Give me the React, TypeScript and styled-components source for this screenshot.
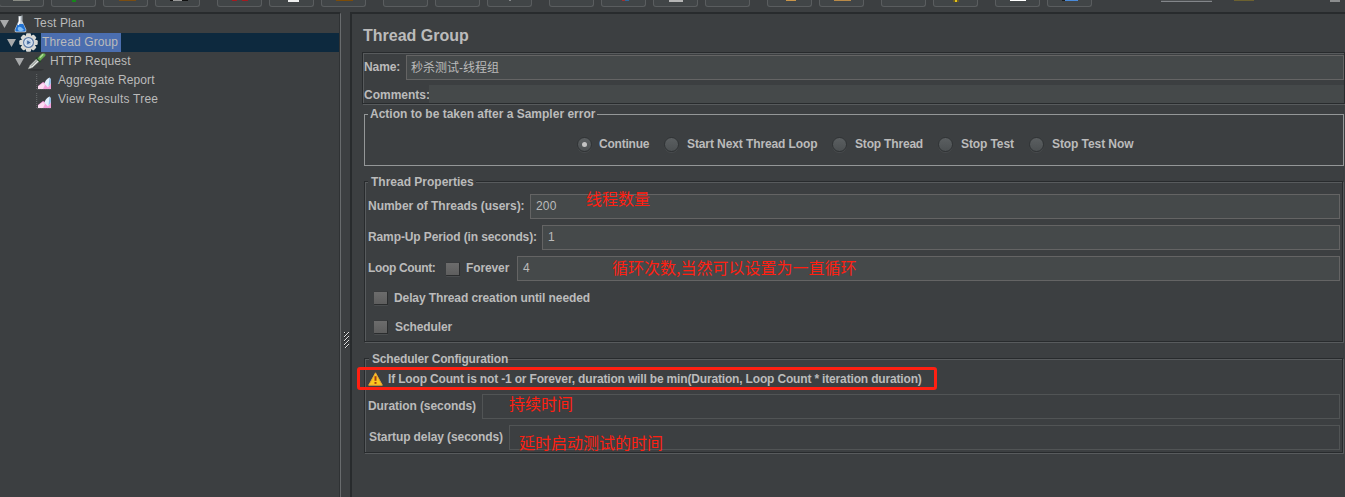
import React from 'react';
import styled, { createGlobalStyle } from 'styled-components';

const c = {
  bg: '#3c3f41',
  field: '#45494a',
  fieldLine: '#646464',
  offLine: '#515455',
  text: '#bbbbbb',
  dark: '#282b2d',
  light: '#585b5d',
  red: '#ff2012',
};

const Global = createGlobalStyle`
  *, *::before, *::after { box-sizing: border-box; }
  html, body { margin: 0; background: ${c.bg}; }
  body { font-family: 'Liberation Sans', 'Noto Sans CJK SC', sans-serif; font-size: 12px; color: ${c.text}; }
`;

const Window = styled.div`
  position: relative;
  display: flex;
  flex-direction: column;
  width: 1345px;
  height: 497px;
  overflow: hidden;
  background: ${c.bg};
`;

/* ---- toolbar ---- */
const Toolbar = styled.div`
  display: flex;
  align-items: flex-start;
  height: 12px;
  flex: none;
  margin-left: -1px;
`;
const ToolButton = styled.div<{ $gap: number }>`
  display: flex;
  flex: none;
  width: 45px;
  height: 7px;
  margin-right: ${p => p.$gap}px;
  border: 1px solid #5a5d5f;
  border-top: 0;
  border-radius: 0 0 3px 3px;
  background: #414547;
`;
const Glyph = styled.span<{ $x: number; $w: number; $fill: string; $h?: number }>`
  flex: none;
  width: ${p => p.$w}px;
  height: ${p => p.$h ?? 1}px;
  margin-left: ${p => p.$x}px;
  background: ${p => p.$fill};
`;

/* ---- body ---- */
const Body = styled.div`
  display: flex;
  flex: 1;
  min-height: 0;
`;
const Tree = styled.div`
  width: 341px;
  flex: none;
  border-top: 2px solid ${c.dark};
  border-right: 1px solid #686b6d;
  box-shadow: inset -1px 0 0 #2f3234;
`;
const TreeRow = styled.div<{ $indent: number; $selected?: boolean }>`
  display: flex;
  align-items: center;
  height: 19px;
  margin-right: 1px;
  padding-left: ${p => p.$indent}px;
  background: ${p => (p.$selected ? '#0d293e' : 'transparent')};
`;
const Arrow = styled.svg`
  flex: none;
  width: 9px;
  height: 8px;
  margin-top: 1px;
`;
const TreeIcon = styled.svg<{ $x: number; $w: number }>`
  flex: none;
  width: ${p => p.$w}px;
  height: 19px;
  margin-left: ${p => p.$x}px;
`;
const TreeLabel = styled.span<{ $x: number; $selected?: boolean; $s?: number }>`
  height: 19px;
  line-height: 19px;
  margin-left: ${p => p.$x}px;
  padding: 0 3px 0 1px;
  letter-spacing: ${p => p.$s ?? 0.12}px;
  white-space: nowrap;
  background: ${p => (p.$selected ? '#4b6eaf' : 'transparent')};
`;
const Splitter = styled.div`
  display: flex;
  width: 9px;
  flex: none;
  padding: 320px 0 0 3px;
`;
const Main = styled.div`
  flex: 1;
  min-width: 0;
  border-top: 2px solid ${c.dark};
  border-left: 2px solid ${c.dark};
`;
const Title = styled.div`
  height: 38px;
  padding: 3px 0 0 11px;
  line-height: 38px;
  font-size: 16px;
  font-weight: bold;
`;
const Etched = styled.div<{ $w: number; $h: number; $mt?: number; $ml: number }>`
  width: ${p => p.$w}px;
  height: ${p => p.$h}px;
  margin: ${p => p.$mt ?? 0}px 0 0 ${p => p.$ml}px;
  border: 1px solid ${c.dark};
  box-shadow: 1px 1px 0 ${c.light}, inset 1px 1px 0 ${c.light};
`;
const ActionGroup = styled.div`
  width: 980px;
  height: 52px;
  margin: 10px 0 0 12px;
  border: 1px solid #949798;
`;
const Legend = styled.div<{ $x: number; $w: number; $pad: number; $s?: number; $line?: number }>`
  width: ${p => p.$w}px;
  height: 16px;
  margin: -8px 0 0 ${p => p.$x}px;
  padding-left: ${p => p.$pad}px;
  line-height: ${p => p.$line ?? 15}px;
  font-weight: bold;
  letter-spacing: ${p => p.$s ?? 0}px;
  white-space: nowrap;
  background: ${c.bg};
`;
const Row = styled.div<{ $mt?: number; $h?: number; $x?: number }>`
  display: flex;
  align-items: center;
  height: ${p => p.$h ?? 25}px;
  margin-top: ${p => p.$mt ?? 0}px;
  padding-left: ${p => p.$x ?? 3}px;
  padding-right: 2px;
`;
const Label = styled.span<{ $w?: number; $s?: number }>`
  flex: none;
  width: ${p => (p.$w ? p.$w + 'px' : 'auto')};
  line-height: 15px;
  font-weight: bold;
  letter-spacing: ${p => p.$s ?? 0}px;
  white-space: nowrap;
`;
const Field = styled.div<{ $off?: boolean }>`
  flex: 1;
  height: 25px;
  padding-left: 5px;
  line-height: 23px;
  letter-spacing: 0.2px;
  border: 1px solid ${p => (p.$off ? c.offLine : c.fieldLine)};
  background: ${p => (p.$off ? 'transparent' : c.field)};
`;
const NameField = styled(Field)`
  padding-left: 4px;
  line-height: 24px;
  letter-spacing: 0;
`;
const NameRow = styled.div`
  display: flex;
  align-items: center;
  height: 25px;
  margin-top: 2px;
  padding-left: 1px;
`;
const CommentRow = styled.div`
  display: flex;
  align-items: flex-end;
  height: 18px;
  margin-top: 5px;
  padding-left: 1px;
`;
const PlainField = styled.div`
  flex: 1;
  height: 18px;
  background: ${c.field};
`;
const Check = styled.span<{ $mr: number }>`
  flex: none;
  width: 14px;
  height: 14px;
  margin-right: ${p => p.$mr}px;
  border: solid #2b2d2e;
  border-width: 0 1px 1px 0;
  border-top: 1px solid #393b3d;
  border-radius: 1px;
  background: linear-gradient(#6c6c6c, #5e5e5e);
  box-shadow: 0 1px 0 #4a4d4f;
`;
const Radios = styled.div`
  display: flex;
  height: 15px;
  margin: 14px 0 0 212px;
`;
const Option = styled.div<{ $w: number }>`
  display: flex;
  align-items: center;
  flex: none;
  width: ${p => p.$w}px;
`;
const Dot = styled.span<{ $mr: number }>`
  display: flex;
  align-items: center;
  justify-content: center;
  flex: none;
  width: 15px;
  height: 15px;
  margin-right: ${p => p.$mr}px;
  border: 1px solid #303335;
  border-radius: 50%;
  background: linear-gradient(#5b5f61, #4c5052);
  box-shadow: 0 1px 0 #484b4d;
`;
const DotMark = styled.span`
  width: 5px;
  height: 5px;
  border-radius: 50%;
  background: #c4c4c4;
`;
const WarnIcon = styled.svg`
  flex: none;
  width: 15px;
  height: 14px;
  margin-right: 5px;
`;

/* ---- red markings lying over the form ---- */
const Note = styled.div<{ $x: number; $y: number }>`
  position: absolute;
  left: ${p => p.$x}px;
  top: ${p => p.$y}px;
  font: 16px/20px 'Noto Sans CJK SC', sans-serif;
  color: ${c.red};
  white-space: nowrap;
`;
const RedFrame = styled.div`
  position: absolute;
  left: 357px;
  top: 367px;
  width: 580px;
  height: 23px;
  border: 3px solid ${c.red};
  border-radius: 3px;
`;

const tools: { gap: number; x?: number; w?: number; fill?: string; h?: number }[] = [
  { gap: 7, x: 13, w: 17, fill: '#8a8c85' },
  { gap: 7, x: 20, w: 4, fill: '#16871a', h: 2 },
  { gap: 7, x: 15, w: 17, fill: '#7a4d12' },
  { gap: 17, x: 14, w: 18, fill: 'linear-gradient(90deg,#111 0 3px,#999 3px 12px,#111 12px)' },
  { gap: 7, x: 14, w: 16, fill: 'linear-gradient(90deg,#a31a20 0 5px,#454545 5px 10px,#a31a20 10px)' },
  { gap: 7, x: 18, w: 11, fill: '#eeeeee', h: 2 },
  { gap: 17, x: 14, w: 17, fill: '#7c4c08' },
  { gap: 7 },
  { gap: 7 },
  { gap: 17, x: 21, w: 2, fill: '#85888a' },
  { gap: 7 },
  { gap: 7, x: 20, w: 7, fill: 'linear-gradient(90deg,#a03030 0 3px,#2d679b 3px)' },
  { gap: 7, x: 15, w: 14, fill: '#b5b5b5', h: 2 },
  { gap: 17 },
  { gap: 7, x: 18, w: 10, fill: '#c99549' },
  { gap: 17, x: 14, w: 17, fill: '#b98a48' },
  { gap: 7 },
  { gap: 17, x: 19, w: 6, fill: 'linear-gradient(90deg,#6b5a20 0 2px,#e3c31c 2px 4px,#6b5a20 4px)', h: 2 },
  { gap: 7, x: 14, w: 16, fill: '#ffffff', h: 1 },
  { gap: 69, x: 14, w: 16, fill: 'linear-gradient(90deg,#1b1b1b 0 3px,#4a8bdb 3px)', h: 1 },
];

const ArrowDown = () => (
  <Arrow viewBox="0 0 9 8"><path d="M0 0H9L4.5 8Z" fill="#a8aaab" /></Arrow>
);

const Flask = () => (
  <TreeIcon $x={5} $w={13} viewBox="0 0 13 19">
    <path d="M4.500 2h3.800V7L12.300 15.500Q12.800 18 11 18.200H2Q.2 18 .7 15.500L4.500 7Z" fill="#c9d2da" />
    <path d="M3.700 10h5.600L11.600 15.600Q12 17.500 10.600 17.600H2.300Q.9 17.500 1.400 15.600Z" fill="#2273d4" />
    <path d="M4 13.500Q5.500 12 7.500 13.500T10 16Q8 17.500 5.500 17 3 16 4 13.500Z" fill="#7fbdf6" />
    <path d="M5.600 3v5L4.200 11" stroke="#fff" strokeWidth="1.300" fill="none" />
    <path d="M8 .8v6" stroke="#878e92" strokeWidth="1" />
  </TreeIcon>
);

const Gear = () => (
  <TreeIcon $x={3} $w={19} viewBox="0 0 19 19">
    <g fill="#d9d9d5">
      {[0, 45, 90, 135].map(a => (
        <rect key={a} x="7" y=".3" width="5" height="18.400" rx="1.200" transform={`rotate(${a} 9.500 9.500)`} />
      ))}
      <circle cx="9.500" cy="9.500" r="7.400" />
    </g>
    <circle cx="9.500" cy="9.500" r="4.900" fill="#e8eef5" stroke="#5b7aa6" strokeWidth="1.200" />
    <circle cx="9.500" cy="9.500" r="3.200" fill="#bccfe4" />
    <path d="M8.200 7.400l3.500 2.100L8.200 11.600Z" fill="#3d639a" />
  </TreeIcon>
);

const Dropper = () => (
  <TreeIcon $x={3} $w={19} viewBox="0 0 19 19">
    <ellipse cx="9" cy="17.800" rx="8" ry=".9" fill="#303335" />
    <path d="M1.200 17L3 13.500 10 6.500 12.500 9 5.500 15.500Z" fill="#e8ebe8" stroke="#8a8f8d" strokeWidth=".6" />
    <path d="M4 14.500L10.500 8" stroke="#5c6563" strokeWidth=".9" />
    <path d="M9 5.500L13.700 10" stroke="#27472b" strokeWidth="1.800" />
    <path d="M10.500 6.500L14.300 2Q17 .3 18.200 2T16.800 5.200L13 9Z" fill="#62a84d" />
    <path d="M12.800 5.700L16.200 2.300" stroke="#b4dd9c" strokeWidth="1.400" />
  </TreeIcon>
);

const Graph = () => (
  <TreeIcon $x={0} $w={16} viewBox="0 0 16 19">
    <path d="M.7 3V18.300H15.500" fill="none" stroke="#75787a" strokeWidth=".8" strokeDasharray="1 1" />
    <path d="M2 18V15L7 11 10 12.500 15 11V18Z" fill="#f19fda" />
    <path d="M2 18V15.500L7 12 9 14 7 18Z" fill="#fcdcf2" />
    <path d="M8.500 13Q9 8.500 13.500 6.500 16 9 14.500 13L12 16.500Z" fill="#e2f0fc" />
    <path d="M13.500 6.500Q16 9 14.500 13L12.500 15.500Z" fill="#94bfe9" />
  </TreeIcon>
);

const Grip = () => (
  <svg width="5" height="16" viewBox="0 0 5 16" shapeRendering="crispEdges">
    {Array.from({ length: 16 }, (_, y) =>
      [0, 1, 2, 3, 4].map(x =>
        (x + y) % 4 === 0 ? <rect key={`${x}-${y}`} x={x} y={y} width="1" height="1" fill="#e0e0e0" />
          : (x + y) % 4 === 1 ? <rect key={`${x}-${y}`} x={x} y={y} width="1" height="1" fill="#1e2022" /> : null
      )
    )}
  </svg>
);

export default function App() {
  return (
    <Window>
      <Global />
      <Toolbar>
        {tools.map((t, i) => (
          <ToolButton key={i} $gap={t.gap}>
            {t.fill && <Glyph $x={t.x!} $w={t.w!} $fill={t.fill} $h={t.h} />}
          </ToolButton>
        ))}
        <Glyph $x={0} $w={51} $fill="linear-gradient(#4d5052 0 1px,#83868a 1px)" $h={2} />
        <Glyph $x={22} $w={20} $fill="#6c6130" />
        <Glyph $x={76} $w={10} $fill="#8b8d8e" $h={2} />
      </Toolbar>
      <Body>
        <Tree>
          <TreeRow $indent={0}><ArrowDown /><Flask /><TreeLabel $x={6}>Test Plan</TreeLabel></TreeRow>
          <TreeRow $indent={7} $selected><ArrowDown /><Gear /><TreeLabel $x={3} $selected>Thread Group</TreeLabel></TreeRow>
          <TreeRow $indent={15}><ArrowDown /><Dropper /><TreeLabel $x={3}>HTTP Request</TreeLabel></TreeRow>
          <TreeRow $indent={36}><Graph /><TreeLabel $x={5}>Aggregate Report</TreeLabel></TreeRow>
          <TreeRow $indent={36}><Graph /><TreeLabel $x={5} $s={0.22}>View Results Tree</TreeLabel></TreeRow>
        </Tree>
        <Splitter><Grip /></Splitter>
        <Main>
          <Title>Thread Group</Title>
          <Etched $w={983} $h={52} $ml={10}>
            <NameRow><Label $w={42} $s={-0.1}>Name:</Label><NameField>秒杀测试-线程组</NameField></NameRow>
            <CommentRow><Label $w={65}>Comments:</Label><PlainField /></CommentRow>
          </Etched>
          <ActionGroup>
            <Legend $x={3} $w={229} $pad={2}>Action to be taken after a Sampler error</Legend>
            <Radios>
              <Option $w={87}><Dot $mr={7}><DotMark /></Dot><Label $s={-0.22}>Continue</Label></Option>
              <Option $w={168}><Dot $mr={8} /><Label $s={-0.1}>Start Next Thread Loop</Label></Option>
              <Option $w={106}><Dot $mr={8} /><Label $s={-0.18}>Stop Thread</Label></Option>
              <Option $w={91}><Dot $mr={8} /><Label $s={-0.1}>Stop Test</Label></Option>
              <Option $w={110}><Dot $mr={8} /><Label $s={-0.08}>Stop Test Now</Label></Option>
            </Radios>
          </ActionGroup>
          <Etched $w={979} $h={161} $mt={15} $ml={12}>
            <Legend $x={3} $w={108} $pad={3} $line={17}>Thread Properties</Legend>
            <Row $mt={4}><Label $w={162} $s={-0.03}>Number of Threads (users):</Label><Field>200</Field></Row>
            <Row $mt={6}><Label $w={174} $s={-0.11}>Ramp-Up Period (in seconds):</Label><Field>1</Field></Row>
            <Row $mt={6}>
              <Label $w={78} $s={-0.35}>Loop Count:</Label><Check $mr={6} /><Label $w={51} $s={-0.12}>Forever</Label><Field>4</Field>
            </Row>
            <Row $mt={10} $h={14} $x={9}><Check $mr={6} /><Label $s={-0.1}>Delay Thread creation until needed</Label></Row>
            <Row $mt={15} $h={14} $x={9}><Check $mr={7} /><Label $s={-0.1}>Scheduler</Label></Row>
          </Etched>
          <Etched $w={979} $h={95} $mt={16} $ml={12}>
            <Legend $x={4} $w={138} $pad={3} $s={-0.17} $line={17}>Scheduler Configuration</Legend>
            <Row $mt={4} $h={16}>
              <WarnIcon viewBox="0 0 15 14">
                <path d="M7.500.8L14.300 13.200H.7Z" fill="#fcc81c" stroke="#e8a33a" strokeWidth="1" strokeLinejoin="round" />
                <path d="M7.500 4.200v4.600" stroke="#a53a10" strokeWidth="2" />
                <path d="M7.500 10v1.800" stroke="#a53a10" strokeWidth="2" />
              </WarnIcon>
              <Label $s={-0.165}>If Loop Count is not -1 or Forever, duration will be min(Duration, Loop Count * iteration duration)</Label>
            </Row>
            <Row $mt={7}><Label $w={114} $s={-0.08}>Duration (seconds)</Label><Field $off /></Row>
            <Row $mt={6} $x={4}><Label $w={140} $s={-0.09}>Startup delay (seconds)</Label><Field $off /></Row>
          </Etched>
        </Main>
      </Body>
      <RedFrame />
      <Note $x={586} $y={188}>线程数量</Note>
      <Note $x={612} $y={257}>循环次数,当然可以设置为一直循环</Note>
      <Note $x={509} $y={393}>持续时间</Note>
      <Note $x={519} $y={432}>延时启动测试的时间</Note>
    </Window>
  );
}
